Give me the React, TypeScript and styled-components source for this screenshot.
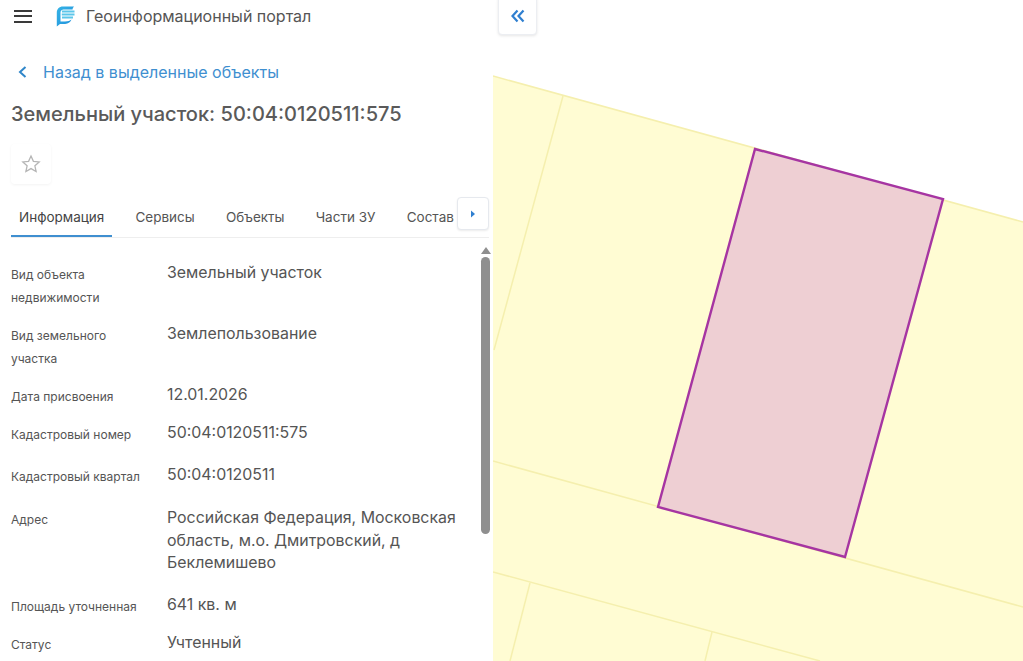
import React from 'react';
import styled, { createGlobalStyle } from 'styled-components';

const GlobalStyle = createGlobalStyle`
  html, body {
    margin: 0;
    padding: 0;
    height: 100%;
    overflow: hidden;
    background: #fff;
  }
  #root {
    height: 100%;
  }
`;

const Page = styled.div`
  display: flex;
  width: 1023px;
  height: 661px;
  overflow: hidden;
  font-family: Inter, "Liberation Sans", sans-serif;
  color: #4a4a4a;
`;

const Sidebar = styled.aside`
  flex: 0 0 493px;
  height: 661px;
  display: flex;
  flex-direction: column;
  overflow: hidden;
  background: #fff;
`;

const Header = styled.header`
  flex: 0 0 32px;
  display: flex;
  align-items: center;
  padding-left: 14px;
`;

const MenuButton = styled.button`
  width: 18px;
  height: 13px;
  padding: 0;
  border: 0;
  background: none;
  display: flex;
  flex-direction: column;
  justify-content: space-between;
`;

const MenuBar = styled.span`
  display: block;
  height: 2px;
  background: #3a3a3a;
`;

const Logo = styled.svg`
  width: 22px;
  height: 22px;
  margin-left: 23px;
`;

const PortalName = styled.div`
  margin-left: 9px;
  font-size: 16px;
  color: #555;
`;

const BackLink = styled.a`
  display: flex;
  align-items: center;
  margin-top: 30px;
  height: 20px;
  padding-left: 18px;
  font-size: 16px;
  color: #3f8fd0;
`;

const BackIcon = styled.svg`
  width: 9px;
  height: 12px;
  margin-right: 16px;
`;

const Title = styled.h1`
  margin: 20px 0 0 11px;
  font-size: 20.05px;
  line-height: 24px;
  font-weight: 500;
  color: #5a5a5a;
`;

const FavButton = styled.button`
  width: 40px;
  height: 40px;
  margin: 18px 0 0 11px;
  padding: 0;
  border: 0;
  border-radius: 4px;
  background: #fff;
  box-shadow: 0 1px 3px rgba(0, 0, 0, 0.05);
  display: flex;
  align-items: center;
  justify-content: center;
`;

const TabBar = styled.nav`
  position: relative;
  display: flex;
  margin: 13px 4px 0 11px;
  height: 40px;
  border-bottom: 1px solid #eeeeee;
`;

const Tab = styled.div<{ $active?: boolean }>`
  padding: 0 8px;
  margin-right: 15.150px;
  height: 40px;
  box-sizing: border-box;
  line-height: 41px;
  font-size: 13.5px;
  color: ${p => (p.$active ? '#444' : '#555')};
  border-bottom: 2px solid ${p => (p.$active ? '#3f8fd0' : 'transparent')};
`;

const TabNext = styled.button`
  position: absolute;
  right: 0;
  top: 0;
  width: 32px;
  height: 33px;
  padding: 0;
  background: #fff;
  border: 1px solid #e6e9ee;
  border-radius: 4px;
  box-shadow: 0 1px 2px rgba(0, 0, 0, 0.08);
  display: flex;
  align-items: center;
  justify-content: center;
`;

const Body = styled.div`
  flex: 1;
  min-height: 0;
  display: flex;
  position: relative;
`;

const InfoList = styled.dl`
  flex: 1;
  margin: 0;
  padding: 24px 26px 0 11px;
`;

const InfoRow = styled.div<{ $after: number }>`
  display: flex;
  margin-bottom: ${p => p.$after}px;
`;

const InfoLabel = styled.dt`
  flex: 0 0 156px;
  box-sizing: border-box;
  margin: 1px 0 -1px;
  padding-right: 14px;
  font-size: 12px;
  line-height: 23px;
  color: #555;
`;

const InfoValue = styled.dd`
  margin: 0;
  flex: 1;
  font-size: 15.900px;
  line-height: 22.500px;
  color: #555;
`;

const ScrollTrack = styled.div`
  position: absolute;
  top: 9px;
  right: 2px;
  width: 10px;
`;

const ScrollThumb = styled.div`
  width: 9px;
  height: 277px;
  margin-top: 3px;
  border-radius: 5px;
  background: #8f8f8f;
`;

const MapArea = styled.main`
  position: relative;
  flex: 1;
  height: 661px;
  background: #fff;
`;

const MapCanvas = styled.svg`
  display: block;
  width: 530px;
  height: 661px;
`;

const CollapseButton = styled.button`
  position: absolute;
  left: 5px;
  top: -4px;
  width: 39px;
  height: 39px;
  padding: 0;
  background: #fff;
  border: 1px solid #eceef2;
  border-radius: 4px;
  box-shadow: 0 1px 3px rgba(0, 0, 0, 0.1);
  display: flex;
  align-items: center;
  justify-content: center;
`;

const rows = [
  { label: 'Вид объекта недвижимости', value: 'Земельный участок', after: 15 },
  { label: 'Вид земельного участка', value: 'Землепользование', after: 15 },
  { label: 'Дата присвоения', value: '12.01.2026', after: 15 },
  { label: 'Кадастровый номер', value: '50:04:0120511:575', after: 19 },
  { label: 'Кадастровый квартал', value: '50:04:0120511', after: 20 },
  { label: 'Адрес', value: 'Российская Федерация, Московская область, м.о. Дмитровский, д Беклемишево', after: 19.5 },
  { label: 'Площадь уточненная', value: '641 кв. м', after: 15 },
  { label: 'Статус', value: 'Учтенный', after: 15 },
];

const tabs = ['Информация', 'Сервисы', 'Объекты', 'Части ЗУ', 'Состав'];

export default function App() {
  return (
    <Page>
      <GlobalStyle />
      <Sidebar>
        <Header>
          <MenuButton aria-label="Меню">
            <MenuBar />
            <MenuBar />
            <MenuBar />
          </MenuButton>
          <Logo viewBox="0 0 22 22">
            <defs>
              <linearGradient id="logoFill" x1="0" y1="0" x2="1" y2="1">
                <stop offset="0" stopColor="#35b4e6" />
                <stop offset="1" stopColor="#1f8fdc" />
              </linearGradient>
            </defs>
            <path d="M8 1.500H19C18 2.500 17.500 3.500 17.500 4.500H8.500C7 4.500 5.800 5.500 5.500 7V16.500H10C13 16.500 15 15.800 16.500 14.500C15 18 12 19 9 19H5L1.800 21.500V8C1.800 4 4 1.500 8 1.500Z" fill="url(#logoFill)" />
            <path d="M7 6.500H19.500M6.800 9.500H19.500M7 12.500H18" stroke="#5cc6ea" strokeWidth="2" fill="none" />
          </Logo>
          <PortalName>Геоинформационный портал</PortalName>
        </Header>
        <BackLink>
          <BackIcon viewBox="0 0 9 12">
            <path d="M7.500 1L2 6L7.500 11" stroke="#2f86c9" strokeWidth="2" fill="none" />
          </BackIcon>
          Назад в выделенные объекты
        </BackLink>
        <Title>Земельный участок: 50:04:0120511:575</Title>
        <FavButton aria-label="В избранное">
          <svg width="20" height="20" viewBox="0 0 20 20">
            <path d="M10 2l2.400 5.300 5.800.6-4.300 3.900 1.200 5.700L10 14.600l-5.100 2.900 1.200-5.700L1.800 7.900l5.800-.6z" fill="none" stroke="#b5b5b5" strokeWidth="1.300" />
          </svg>
        </FavButton>
        <TabBar>
          {tabs.map((t, i) => (
            <Tab key={t} $active={i === 0}>{t}</Tab>
          ))}
          <TabNext aria-label="Далее">
            <svg width="6" height="8" viewBox="0 0 6 8"><path d="M1 .5L5 4L1 7.500Z" fill="#2f7fd0" /></svg>
          </TabNext>
        </TabBar>
        <Body>
          <InfoList>
            {rows.map(r => (
              <InfoRow key={r.label} $after={r.after}>
                <InfoLabel>{r.label}</InfoLabel>
                <InfoValue>{r.value}</InfoValue>
              </InfoRow>
            ))}
          </InfoList>
          <ScrollTrack>
            <svg width="10" height="7" viewBox="0 0 10 7" style={{ display: 'block' }}><path d="M5 0L10 7H0Z" fill="#8f8f8f" /></svg>
            <ScrollThumb />
          </ScrollTrack>
        </Body>
      </Sidebar>
      <MapArea>
        <MapCanvas viewBox="493 0 530 661">
          <path d="M493 76L1023 222V661H493Z" fill="#fffcd3" />
          <g stroke="#f5efae" strokeWidth="1.500" fill="none">
            <path d="M493 76L1023 222" />
            <path d="M563 96L494 350" />
            <path d="M493 461L1023 607" />
            <path d="M493 572L820 661" />
            <path d="M530 583L510 661" />
            <path d="M712 632L705 661" />
          </g>
          <path d="M755 149L943 199L845 557L658 507Z" fill="#eecfd3" stroke="#a635a2" strokeWidth="2.400" />
        </MapCanvas>
        <CollapseButton aria-label="Свернуть">
          <svg width="14" height="14" viewBox="0 0 14 14">
            <path d="M6.500 1.500L1.500 7L6.500 12.500M12.500 1.500L7.500 7L12.500 12.500" fill="none" stroke="#2f7fd0" strokeWidth="2.200" />
          </svg>
        </CollapseButton>
      </MapArea>
    </Page>
  );
}
